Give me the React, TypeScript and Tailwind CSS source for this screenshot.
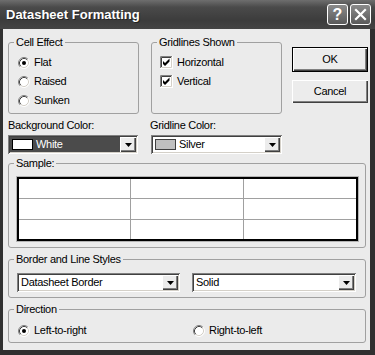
import React from "react";

function Radio({ checked }: { checked?: boolean }) {
  return (
    <svg width="12" height="12" viewBox="0 0 12 12" className="shrink-0">
      <circle cx="6" cy="6" r="5" fill="#fff" />
      <path d="M2.11 9.89A5.5 5.5 0 0 1 9.89 2.11" fill="none" stroke="#808080" />
      <path d="M9.89 2.11A5.5 5.5 0 0 1 2.11 9.89" fill="none" stroke="#fff" />
      <path d="M2.82 9.18A4.5 4.5 0 0 1 9.18 2.82" fill="none" stroke="#404040" />
      <path d="M9.18 2.82A4.5 4.5 0 0 1 2.82 9.18" fill="none" stroke="#d4d0c8" />
      {checked && <circle cx="6" cy="6" r="2" fill="#000" />}
    </svg>
  );
}

function Check() {
  return (
    <svg width="13" height="13" viewBox="0 0 13 13" className="shrink-0">
      <rect x="0" y="0" width="13" height="13" fill="#fff" />
      <path d="M0.5 12V0.5H12" fill="none" stroke="#808080" />
      <path d="M1.5 11V1.5H11" fill="none" stroke="#404040" />
      <path d="M0.5 12.5H12.5V0" fill="none" stroke="#fff" />
      <path d="M1.5 11.5H11.5V1" fill="none" stroke="#d4d0c8" />
      <path d="M3 5L5 7L9.5 2.5V5.5L5 10L3 8Z" fill="#000" />
    </svg>
  );
}

function Group({
  title,
  className,
  children,
}: {
  title: string;
  className: string;
  children?: React.ReactNode;
}) {
  return (
    <fieldset className={"border border-[#a0a0a0] rounded-[3px] min-w-0 " + className}>
      <legend className="ml-[5px] px-[2px] leading-[13px]">{title}</legend>
      {children}
    </fieldset>
  );
}

function DropBtn() {
  return (
    <div className="w-[16px] h-[15px] shrink-0 bg-[#ececec] flex items-center justify-center shadow-[inset_1px_1px_0_#fff,inset_-1px_-1px_0_#404040,inset_-2px_-2px_0_#808080]">
      <svg width="7" height="4" viewBox="0 0 7 4">
        <path d="M0 0H7L3.5 4Z" fill="#000" />
      </svg>
    </div>
  );
}

function Combo({ className, children }: { className: string; children?: React.ReactNode }) {
  return (
    <div
      className={
        "h-[19px] flex items-center bg-white p-[2px] shadow-[inset_1px_1px_0_#808080,inset_-1px_-1px_0_#fff,inset_2px_2px_0_#404040,inset_-2px_-2px_0_#d4d0c8] " +
        className
      }
    >
      <div className="flex-1 h-full flex items-center min-w-0">{children}</div>
      <DropBtn />
    </div>
  );
}

function Btn({ label, isDefault }: { label: string; isDefault?: boolean }) {
  if (isDefault) {
    return (
      <div className="h-[25px] w-[76px] border border-black">
        <div className="h-full w-full bg-[#ececec] flex items-center justify-center shadow-[inset_1px_1px_0_#fff,inset_-1px_-1px_0_#404040,inset_-2px_-2px_0_#808080]">
          {label}
        </div>
      </div>
    );
  }
  return (
    <div className="h-[23px] w-[76px] bg-[#ececec] flex items-center justify-center shadow-[inset_1px_1px_0_#fff,inset_-1px_-1px_0_#404040,inset_-2px_-2px_0_#808080]">
      {label}
    </div>
  );
}

export default function App() {
  return (
    <div className="w-[375px] h-[355px] bg-[#303030] flex flex-col overflow-hidden [font-family:'Liberation_Sans',Arial,sans-serif] text-[11px] leading-[13px] tracking-[-0.3px] text-black">
      {/* Title bar */}
      <div className="h-[29px] shrink-0 flex items-center pl-[6px] pr-[4px] bg-[linear-gradient(#6e6e6e,#4a4a4a_25%,#3c3c3c_70%,#444444)]">
        <div className="flex-1 text-white font-bold text-[13px] tracking-normal leading-[16px] [text-shadow:1px_1px_0_#222]">
          Datasheet Formatting
        </div>
        <div className="flex gap-[2px]">
          <div className="w-[21px] h-[21px] rounded-[3px] border border-white bg-[linear-gradient(#8a8a8a,#5a5a5a)] flex items-center justify-center text-white font-bold text-[16px] leading-[16px] tracking-normal">
            ?
          </div>
          <div className="w-[21px] h-[21px] rounded-[3px] border border-white bg-[linear-gradient(#8a8a8a,#5a5a5a)] flex items-center justify-center">
            <svg width="13" height="13" viewBox="0 0 13 13">
              <path d="M2 2L11 11M11 2L2 11" stroke="#fff" strokeWidth="2.2" strokeLinecap="square" />
            </svg>
          </div>
        </div>
      </div>

      {/* Body */}
      <div className="flex-1 ml-[3px] mr-[5px] mb-[5px] bg-[#ebebeb] pl-[5px] pr-[2px] pt-[7px] flex flex-col">
        {/* Top row */}
        <div className="flex h-[78px]">
          <Group title="Cell Effect" className="w-[131px] h-[78px]">
            <div className="pt-[4px] pl-[9px] flex flex-col">
              <div className="h-[19px] flex items-center gap-[4px]">
                <Radio checked />
                <span>Flat</span>
              </div>
              <div className="h-[19px] flex items-center gap-[4px]">
                <Radio />
                <span>Raised</span>
              </div>
              <div className="h-[19px] flex items-center gap-[4px]">
                <Radio />
                <span>Sunken</span>
              </div>
            </div>
          </Group>
          <Group title="Gridlines Shown" className="ml-[12px] w-[131px] h-[78px]">
            <div className="pt-[4px] pl-[8px] flex flex-col">
              <div className="h-[19px] flex items-center gap-[4px]">
                <Check />
                <span>Horizontal</span>
              </div>
              <div className="h-[19px] flex items-center gap-[4px]">
                <Check />
                <span>Vertical</span>
              </div>
            </div>
          </Group>
          <div className="ml-[10px] pt-[11px] flex flex-col gap-[8px]">
            <Btn label="OK" isDefault />
            <Btn label="Cancel" />
          </div>
        </div>

        {/* Color labels */}
        <div className="mt-[5px] flex">
          <div className="w-[142px]">Background Color:</div>
          <div>Gridline Color:</div>
        </div>
        <div className="mt-[3px] flex">
          <Combo className="w-[130px]">
            <div className="h-full flex-1 bg-[#4b4b4b] flex items-center pl-[2px] gap-[3px] text-white">
              <div className="w-[21px] h-[11px] border border-black bg-white" />
              <span>White</span>
            </div>
          </Combo>
          <Combo className="ml-[13px] w-[131px]">
            <div className="h-full flex-1 flex items-center pl-[2px] gap-[3px]">
              <div className="w-[21px] h-[11px] border border-[#404040] bg-[#c0c0c0]" />
              <span>Silver</span>
            </div>
          </Combo>
        </div>

        {/* Sample */}
        <Group title="Sample:" className="mt-[3px] w-[358px]">
          <div className="pt-[7px] pl-[8px] pr-[7px] pb-[6px]">
            <div className="h-[64px] border-2 border-black bg-white shadow-[0_0_0_1px_#b4b4b4] flex flex-col">
              {[0, 1, 2].map((r) => (
                <div
                  key={r}
                  className={"flex-1 grid grid-cols-3 " + (r < 2 ? "border-b border-[#a0a0a0]" : "")}
                >
                  <div className="border-r border-[#a0a0a0]" />
                  <div className="border-r border-[#a0a0a0]" />
                  <div />
                </div>
              ))}
            </div>
          </div>
        </Group>

        {/* Border and Line Styles */}
        <Group title="Border and Line Styles" className="mt-[5px] w-[358px]">
          <div className="pt-[7px] pl-[8px] pb-[5px] flex">
            <Combo className="w-[163px]">
              <span className="pl-[2px]">Datasheet Border</span>
            </Combo>
            <Combo className="ml-[12px] w-[164px]">
              <span className="pl-[2px]">Solid</span>
            </Combo>
          </div>
        </Group>

        {/* Direction */}
        <Group title="Direction" className="mt-[5px] w-[358px]">
          <div className="pt-[5px] pl-[9px] pb-[2px] flex">
            <div className="w-[175px] h-[19px] flex items-center gap-[4px]">
              <Radio checked />
              <span>Left-to-right</span>
            </div>
            <div className="h-[19px] flex items-center gap-[4px]">
              <Radio />
              <span>Right-to-left</span>
            </div>
          </div>
        </Group>
      </div>
    </div>
  );
}
